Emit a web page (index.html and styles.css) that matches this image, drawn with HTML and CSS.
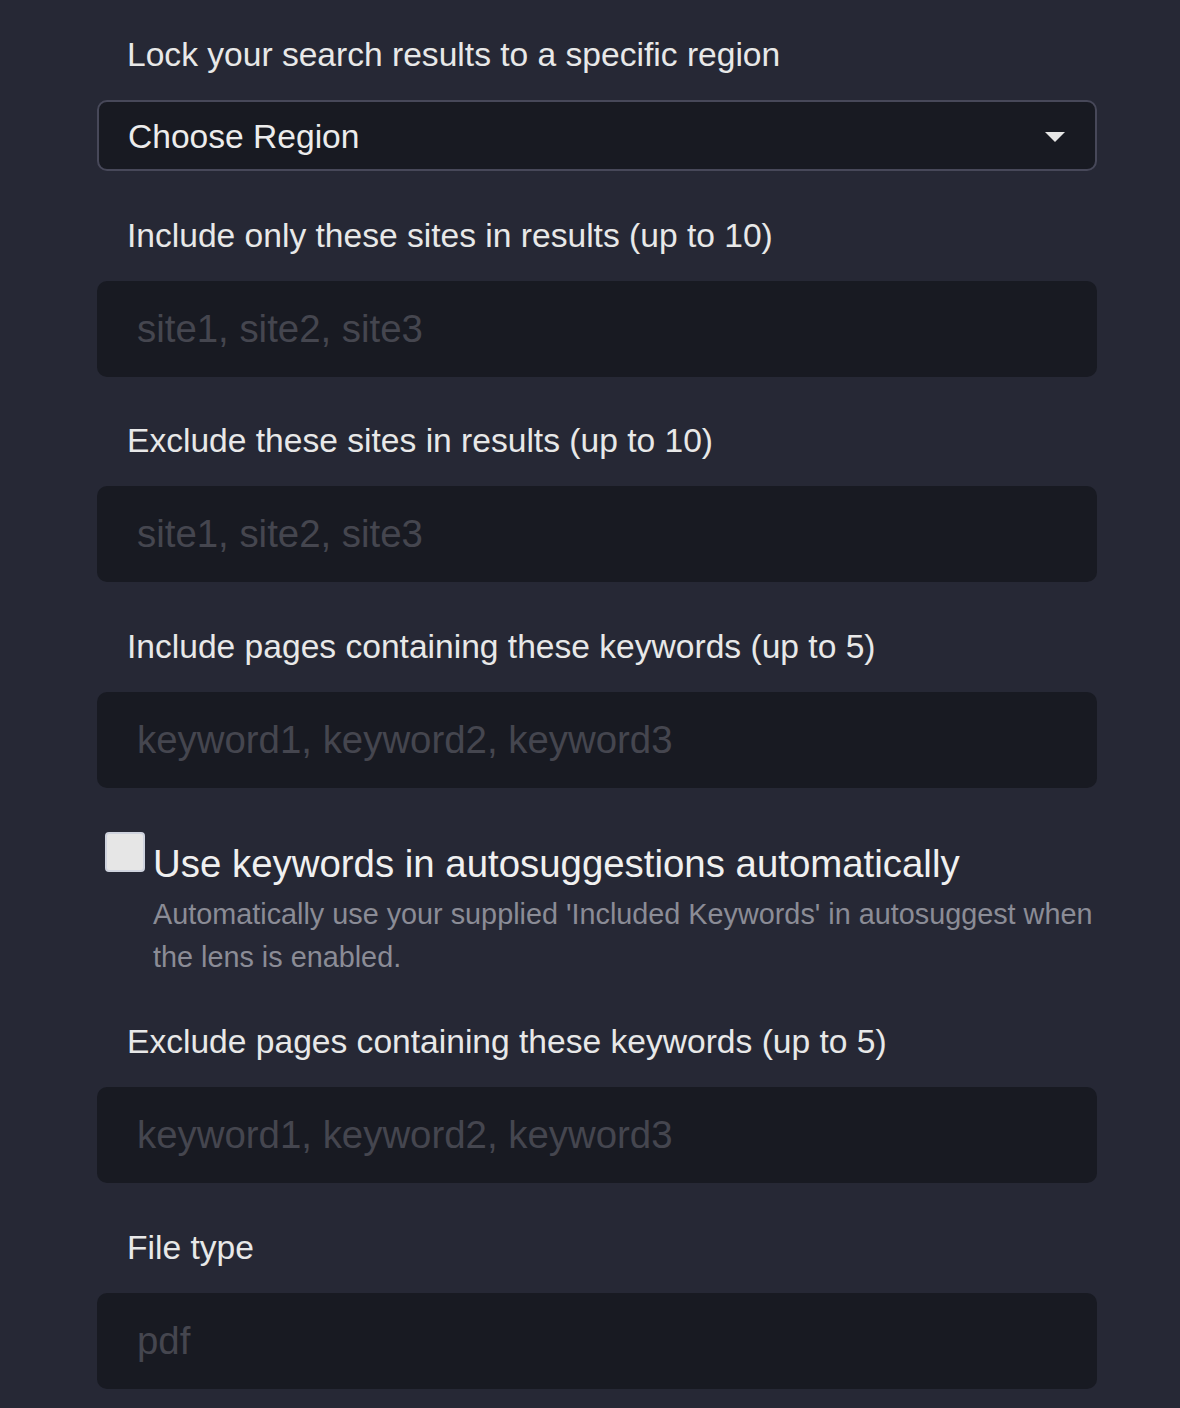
FILE: index.html
```html
<!DOCTYPE html>
<html lang="en">
<head>
<meta charset="utf-8">
<title>Lens settings</title>
<link rel="stylesheet" href="styles.css">
</head>
<body>
<main class="form">
  <div class="field">
    <label class="label">Lock your search results to a specific region</label>
    <div class="select">
      <span class="select-text">Choose Region</span>
      <span class="caret"></span>
    </div>
  </div>
  <div class="field">
    <label class="label">Include only these sites in results (up to 10)</label>
    <input class="input" type="text" placeholder="site1, site2, site3">
  </div>
  <div class="field">
    <label class="label">Exclude these sites in results (up to 10)</label>
    <input class="input" type="text" placeholder="site1, site2, site3">
  </div>
  <div class="field">
    <label class="label">Include pages containing these keywords (up to 5)</label>
    <input class="input" type="text" placeholder="keyword1, keyword2, keyword3">
  </div>
  <div class="field check-field">
    <span class="checkbox"></span>
    <div class="check-text">
      <div class="check-title">Use keywords in autosuggestions automatically</div>
      <div class="check-desc">Automatically use your supplied 'Included Keywords' in autosuggest when the lens is enabled.</div>
    </div>
  </div>
  <div class="field">
    <label class="label">Exclude pages containing these keywords (up to 5)</label>
    <input class="input" type="text" placeholder="keyword1, keyword2, keyword3">
  </div>
  <div class="field">
    <label class="label">File type</label>
    <input class="input" type="text" placeholder="pdf">
  </div>
</main>
</body>
</html>
```

FILE: styles.css
```css
html, body {
  margin: 0;
  padding: 0;
  background: #262835;
}
body {
  font-family: "Liberation Sans", Arial, Helvetica, sans-serif;
  color: #e6e6e6;
}
.form {
  width: 1000px;
  margin: 0 0 0 97px;
  padding-top: 35px;
  display: flex;
  flex-direction: column;
}
.field {
  display: flex;
  flex-direction: column;
  margin-bottom: 44.5px;
}
.label {
  display: block;
  padding-left: 30px;
  font-size: 33.6px;
  line-height: 40px;
  margin-bottom: 25px;
  color: #e8e8e8;
}
.select {
  box-sizing: border-box;
  height: 71px;
  border: 2px solid #474859;
  border-radius: 10px;
  background: #181a22;
  display: flex;
  align-items: center;
  justify-content: space-between;
  padding: 0 30px 0 29px;
}
.select-text {
  font-size: 33.6px;
  color: #ececec;
  margin-top: 3px;
}
.caret {
  width: 0;
  height: 0;
  border-left: 10.5px solid transparent;
  border-right: 10.5px solid transparent;
  border-top: 10px solid #e6e6e6;
  margin-top: 2px;
}
.input {
  box-sizing: border-box;
  height: 96px;
  width: 100%;
  border: none;
  outline: none;
  border-radius: 10px;
  background: #181a22;
  padding: 0 40px;
  font-family: "Liberation Sans", Arial, Helvetica, sans-serif;
  font-size: 38.4px;
  color: #e6e6e6;
}
.input::placeholder {
  color: #45464f;
  opacity: 1;
}
.check-field {
  flex-direction: row;
  align-items: flex-start;
  margin-bottom: 43px;
  padding-left: 8px;
}
.checkbox {
  box-sizing: border-box;
  flex: none;
  width: 40px;
  height: 40px;
  border: 2px solid #cfd3de;
  border-radius: 4px;
  background: #e6e6e6;
}
.check-text {
  padding-top: 3px;
  padding-left: 8px;
}
.check-title {
  font-size: 38.4px;
  line-height: 57.6px;
  color: #f0f0f0;
}
.check-desc {
  font-size: 28.8px;
  line-height: 43.2px;
  color: #8b8c96;
}
```
